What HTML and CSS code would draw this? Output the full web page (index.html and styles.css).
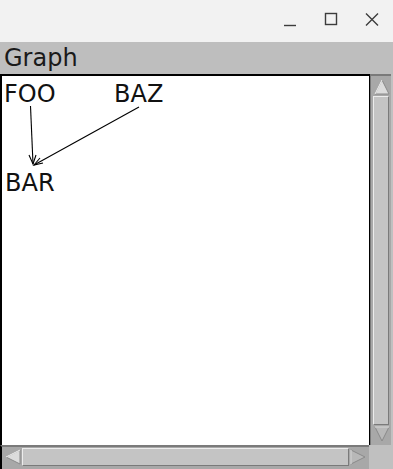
FILE: index.html
```html
<!DOCTYPE html>
<html>
<head>
<meta charset="utf-8">
<link rel="stylesheet" href="styles.css">
</head>
<body>
<div class="window">
  <div class="titlebar">
    <div class="tb-btn">
      <svg width="16" height="16" viewBox="0 0 16 16"><line x1="2" y1="13.5" x2="14" y2="13.5" stroke="#3c3c3c" stroke-width="1.4"/></svg>
    </div>
    <div class="tb-btn">
      <svg width="16" height="16" viewBox="0 0 16 16"><rect x="2.5" y="1.5" width="11" height="11" fill="none" stroke="#3c3c3c" stroke-width="1.4"/></svg>
    </div>
    <div class="tb-btn">
      <svg width="16" height="16" viewBox="0 0 16 16"><path d="M2 1.5 L14 13.5 M14 1.5 L2 13.5" stroke="#3c3c3c" stroke-width="1.4"/></svg>
    </div>
  </div>
  <div class="label">Graph</div>
  <div class="panel">
    <div class="row">
      <div class="canvas">
        <span class="node foo">FOO</span>
        <span class="node baz">BAZ</span>
        <span class="node bar">BAR</span>
        <svg class="edges" width="200" height="120" viewBox="0 0 200 120">
          <g stroke="#000" stroke-width="1.1" fill="none">
            <path d="M30.5 32 L33 90"/>
            <path d="M29 81 L33 90 L36 81"/>
            <path d="M139 33 L34 91"/>
            <path d="M40 84 L34 91 L43 89"/>
          </g>
        </svg>
      </div>
      <div class="vscroll">
        <div class="varrow up">
          <svg width="18" height="18" viewBox="0 0 18 18"><path d="M9 2 L16 16 L2 16 Z" fill="#dcdcdc" stroke="#8a8a8a"/><path d="M9 2 L2 16" stroke="#f4f4f4"/></svg>
        </div>
        <div class="vthumb"></div>
        <div class="varrow down">
          <svg width="18" height="18" viewBox="0 0 18 18"><path d="M2 2 L16 2 L9 16 Z" fill="#b8b8b8" stroke="#8a8a8a"/><path d="M2 2 L16 2" stroke="#ececec"/></svg>
        </div>
      </div>
    </div>
    <div class="row bottom">
      <div class="hscroll">
        <div class="harrow left">
          <svg width="18" height="18" viewBox="0 0 18 18"><path d="M2 9 L16 2 L16 16 Z" fill="#dcdcdc" stroke="#8a8a8a"/><path d="M2 9 L16 2" stroke="#f4f4f4"/></svg>
        </div>
        <div class="hthumb"></div>
        <div class="harrow right">
          <svg width="18" height="18" viewBox="0 0 18 18"><path d="M2 2 L16 9 L2 16 Z" fill="#b8b8b8" stroke="#8a8a8a"/><path d="M2 2 L2 16" stroke="#ececec"/></svg>
        </div>
      </div>
      <div class="corner"></div>
    </div>
  </div>
</div>
</body>
</html>
```
FILE: styles.css
```css
html, body {
  margin: 0;
  padding: 0;
  background: #f2f2f2;
}
.window {
  width: 393px;
  height: 469px;
  display: flex;
  flex-direction: column;
  font-family: "DejaVu Sans", sans-serif;
  overflow: hidden;
}
.titlebar {
  height: 42px;
  background: #f2f2f2;
  display: flex;
  justify-content: flex-end;
  align-items: flex-start;
  padding-right: 13px;
  gap: 25px;
  box-sizing: border-box;
  padding-top: 12px;
}
.tb-btn {
  width: 16px;
  height: 16px;
}
.tb-btn svg { display: block; }
.label {
  height: 32px;
  background: #bebebe;
  font-size: 24px;
  color: #1a1a1a;
  padding-left: 4px;
  line-height: 32px;
}
.panel {
  flex: 1;
  display: flex;
  flex-direction: column;
  background: #c0c0c0;
}
.row {
  display: flex;
  flex: 1;
}
.row.bottom {
  flex: 0 0 22px;
}
.canvas {
  flex: 1;
  position: relative;
  background: #fff;
  border-top: 2px solid #000;
  border-left: 2px solid #000;
  border-right: 1px solid #000;
}
.node {
  position: absolute;
  font-size: 24px;
  color: #111;
  line-height: 24px;
}
.foo { left: 2px; top: 6px; }
.baz { left: 112px; top: 6px; }
.bar { left: 3px; top: 95px; }
.edges {
  position: absolute;
  left: -2px;
  top: -2px;
}
.vscroll {
  width: 21px;
  background: #a8a8a8;
  border-left: 1px solid #7a7a7a;
  border-top: 2px solid #7a7a7a;
  display: flex;
  flex-direction: column;
  padding: 2px 2px 2px 2px;
  box-sizing: border-box;
  margin-right: 2px;
}
.varrow, .harrow {
  width: 18px;
  height: 18px;
  flex: 0 0 18px;
}
.varrow svg, .harrow svg { display: block; }
.vthumb {
  flex: 1;
  background: #c4c4c4;
  border-top: 1px solid #ececec;
  border-left: 1px solid #ececec;
  border-right: 1px solid #7a7a7a;
  border-bottom: 1px solid #7a7a7a;
}
.hscroll {
  flex: 1;
  background: #a8a8a8;
  border-top: 2px solid #7a7a7a;
  border-left: 2px solid #000;
  display: flex;
  padding: 1px 2px 3px 2px;
  box-sizing: border-box;
}
.hthumb {
  flex: 1;
  background: #c4c4c4;
  border-top: 1px solid #ececec;
  border-left: 1px solid #ececec;
  border-right: 1px solid #7a7a7a;
  border-bottom: 1px solid #7a7a7a;
}
.corner {
  width: 24px;
  background: #c0c0c0;
}
```
